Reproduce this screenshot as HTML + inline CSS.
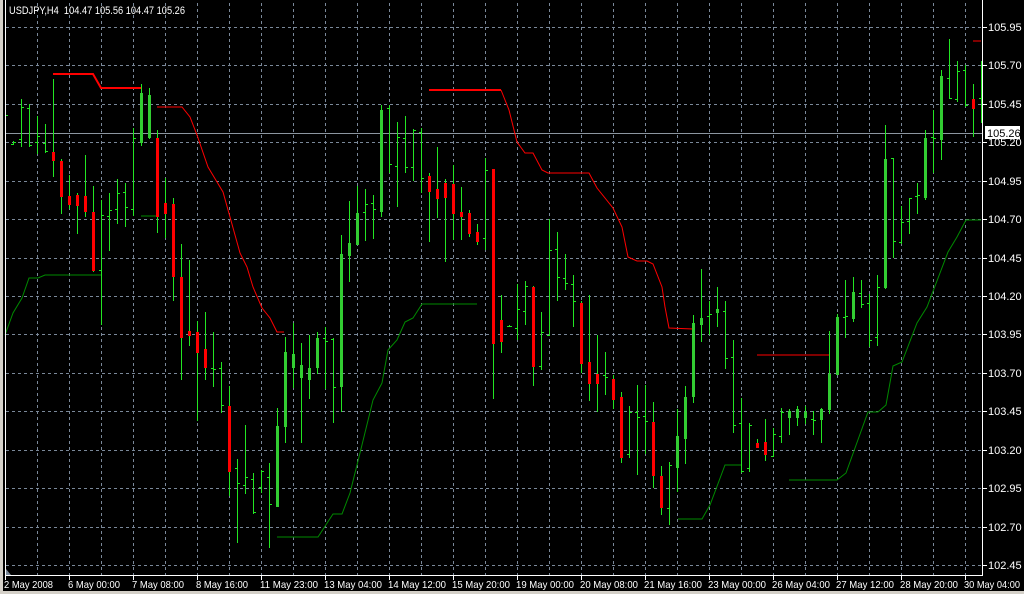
<!DOCTYPE html>
<html><head><meta charset="utf-8"><style>
html,body{margin:0;padding:0;background:#000;width:1024px;height:594px;overflow:hidden}
svg{display:block}
text{font-family:"Liberation Sans",sans-serif;font-size:11px;fill:#fff}
.b text{font-size:10.5px}
</style></head><body>
<svg width="1024" height="594" viewBox="0 0 1024 594" xmlns="http://www.w3.org/2000/svg">
<rect width="1024" height="594" fill="#000"/>
<rect x="0" y="0" width="3" height="594" fill="#d4d0c8"/>
<rect x="0" y="591" width="1024" height="3" fill="#d4d0c8"/>
<g stroke="#7a8899" stroke-width="1" stroke-dasharray="3,3" fill="none">
<path d="M37.5 3V575M69.5 3V575M101.5 3V575M133.5 3V575M165.5 3V575M197.5 3V575M229.5 3V575M261.5 3V575M293.5 3V575M325.5 3V575M357.5 3V575M389.5 3V575M421.5 3V575M453.5 3V575M485.5 3V575M517.5 3V575M549.5 3V575M581.5 3V575M613.5 3V575M645.5 3V575M677.5 3V575M709.5 3V575M741.5 3V575M773.5 3V575M805.5 3V575M837.5 3V575M869.5 3V575M901.5 3V575M933.5 3V575M965.5 3V575"/>
<path d="M6 27.5H982M6 65.5H982M6 104.5H982M6 142.5H982M6 181.5H982M6 219.5H982M6 258.5H982M6 296.5H982M6 334.5H982M6 373.5H982M6 411.5H982M6 450.5H982M6 488.5H982M6 527.5H982M6 565.5H982"/>
</g>
<path d="M6 133.5H982" stroke="#8c96a0" stroke-width="1"/>
<g stroke="#008a00" stroke-width="1" fill="none">
<polyline points="5,335 13,313 22,298 29,278 38,278 45,275 101,275"/>
<polyline points="141,216 157,216"/>
<polyline points="277,537 318,537 333,514 342,514 350,493 360,453 373,400 382,383 388,350 397,340 405,322 413,318 422,304 477,304"/>
<polyline points="678,519 702,519 710,505 725,465 741,465"/>
<polyline points="789,480 837,480 846,473 868,412 878,412 886,405 893,366 902,362 917,323 927,307 948,252 957,237 966,220 981,220"/>
</g>
<g stroke="#ff0000" fill="none">
<polyline stroke-width="2" points="53,74 93,74 101,88 141,88"/>
<polyline stroke-width="1" points="157,107 182,107 190,117 197,135 208,167 217,182 223,192 230,217 240,253 247,267 253,287 262,308 270,318 277,332 284,332"/>
<polyline stroke-width="2" points="429,90 501,90"/>
<polyline stroke-width="1" points="501,90 509,110 517,142 525,153 533,153 542,170 548,173 589,173 597,188 613,208 622,227 628,257 637,261 647,261 653,264 662,287 665,307 669,328 693,329"/>
<polyline stroke-width="1" points="757,355 829,355"/>
<polyline stroke-width="1" points="973,41 981,41"/>
</g>
<path stroke="#22e622" stroke-width="1" fill="none" d="M5.5 103V153M13.5 141V145M21.5 99V147M29.5 104V147M37.5 116V154M45.5 124V153M53.5 79V177M61.5 159V214M69.5 175V209M77.5 193V234M85.5 155V217M93.5 186V272M101.5 200V325M109.5 193V251M117.5 179V224M125.5 183V227M133.5 128V216M141.5 84V146M149.5 88V139M157.5 130V233M165.5 178V238M173.5 198V301M181.5 244V380M189.5 260V346M197.5 321V421M205.5 312V380M213.5 332V387M221.5 362V413M229.5 386V496M237.5 459V543M245.5 425V494M253.5 473V514M261.5 470V493M269.5 463V548M277.5 408V507M285.5 337V443M293.5 323V388M301.5 343V443M309.5 335V399M317.5 332V374M325.5 327V389M333.5 338V423M341.5 235V412M349.5 201V282M357.5 186V244M365.5 189V241M373.5 195V239M381.5 105V217M389.5 105V173M397.5 122V207M405.5 116V173M413.5 129V181M421.5 128V193M429.5 173V242M437.5 147V218M445.5 179V262M453.5 165V240M461.5 187V240M469.5 210V237M477.5 224V245M485.5 158V250M493.5 169V399M501.5 295V353M509.5 325V327M517.5 284V340M525.5 281V325M533.5 286V386M541.5 312V370M549.5 219V336M557.5 232V301M565.5 254V290M573.5 275V327M581.5 301V373M589.5 295V401M597.5 335V412M605.5 352V395M613.5 375V409M621.5 392V463M629.5 406V458M637.5 385V475M645.5 385V454M653.5 402V488M661.5 466V515M669.5 462V525M677.5 409V492M685.5 386V464M693.5 315V403M701.5 269V342M709.5 301V335M717.5 287V327M725.5 301V369M733.5 340V433M741.5 398V473M749.5 423V472M757.5 439V448M765.5 419V461M773.5 428V457M781.5 408V443M789.5 409V435M797.5 406V426M805.5 406V424M813.5 411V435M821.5 408V443M829.5 331V414M837.5 314V375M845.5 280V338M853.5 277V322M861.5 280V308M869.5 294V347M877.5 275V346M885.5 125V289M893.5 158V258M901.5 206V244M909.5 198V234M917.5 183V214M925.5 130V200M933.5 110V173M941.5 70V160M949.5 39V99M957.5 61V102M965.5 65V107M973.5 84V137M981.5 61V123"/>
<path stroke="#22e622" stroke-width="1" fill="none" d="M6 115.5h2M11 144.5h2M14 142.5h2M19 139.5h2M22 107.5h2M27 108.5h2M30 145.5h2M35 142.5h2M38 136.5h2M43 143.5h2M46 151.5h2M99 270.5h2M102 215.5h2M107 216.5h2M110 210.5h2M115 209.5h2M118 193.5h2M123 192.5h2M126 207.5h2M131 209.5h2M134 138.5h2M211 368.5h2M214 369.5h2M219 368.5h2M222 405.5h2M235 468.5h2M238 483.5h2M243 485.5h2M246 477.5h2M251 479.5h2M254 512.5h2M259 487.5h2M262 471.5h2M267 477.5h2M270 504.5h2M323 338.5h2M326 341.5h2M331 339.5h2M334 387.5h2M363 212.5h2M366 204.5h2M371 203.5h2M374 209.5h2M387 108.5h2M390 164.5h2M395 166.5h2M398 137.5h2M403 138.5h2M406 167.5h2M411 167.5h2M414 130.5h2M419 132.5h2M422 178.5h2M483 238.5h2M486 170.5h2M507 326.5h2M510 326.5h2M515 328.5h2M518 309.5h2M523 311.5h2M526 286.5h2M539 366.5h2M542 332.5h2M547 335.5h2M550 250.5h2M555 249.5h2M558 277.5h2M563 278.5h2M566 283.5h2M571 284.5h2M574 301.5h2M603 375.5h2M606 377.5h2M627 454.5h2M630 412.5h2M635 412.5h2M638 417.5h2M643 416.5h2M646 421.5h2M667 508.5h2M670 465.5h2M707 316.5h2M710 314.5h2M723 311.5h2M726 358.5h2M731 357.5h2M734 425.5h2M739 423.5h2M742 471.5h2M747 468.5h2M750 425.5h2M771 456.5h2M774 434.5h2M779 436.5h2M782 412.5h2M811 419.5h2M814 420.5h2M843 317.5h2M846 316.5h2M859 293.5h2M862 304.5h2M867 303.5h2M870 340.5h2M875 337.5h2M878 287.5h2M891 158.5h2M894 241.5h2M899 242.5h2M902 222.5h2M907 221.5h2M910 198.5h2M915 196.5h2M918 195.5h2M931 137.5h2M934 138.5h2M947 78.5h2M950 98.5h2M955 99.5h2M958 71.5h2M963 70.5h2M966 105.5h2M979 98.5h2"/>
<g fill="#ff0000">
<rect x="52" y="152" width="3" height="9"/><rect x="60" y="161" width="3" height="36"/><rect x="68" y="196" width="3" height="9"/><rect x="76" y="195" width="3" height="11"/><rect x="84" y="196" width="3" height="16"/><rect x="92" y="212" width="3" height="59"/><rect x="156" y="138" width="3" height="79"/><rect x="164" y="203" width="3" height="11"/><rect x="172" y="204" width="3" height="73"/><rect x="180" y="277" width="3" height="61"/><rect x="188" y="331" width="3" height="5"/><rect x="196" y="332" width="3" height="21"/><rect x="204" y="349" width="3" height="19"/><rect x="228" y="406" width="3" height="66"/><rect x="428" y="176" width="3" height="16"/><rect x="436" y="189" width="3" height="10"/><rect x="444" y="183" width="3" height="15"/><rect x="452" y="184" width="3" height="30"/><rect x="460" y="212" width="3" height="5"/><rect x="468" y="213" width="3" height="21"/><rect x="476" y="232" width="3" height="10"/><rect x="492" y="169" width="3" height="175"/><rect x="500" y="320" width="3" height="22"/><rect x="532" y="287" width="3" height="80"/><rect x="580" y="303" width="3" height="61"/><rect x="588" y="362" width="3" height="22"/><rect x="596" y="374" width="3" height="10"/><rect x="612" y="379" width="3" height="21"/><rect x="620" y="397" width="3" height="61"/><rect x="652" y="422" width="3" height="54"/><rect x="660" y="476" width="3" height="32"/><rect x="756" y="443" width="3" height="5"/><rect x="764" y="442" width="3" height="13"/><rect x="972" y="99" width="3" height="10"/>
</g>
<g fill="#32cd32">
<rect x="140" y="93" width="3" height="50"/><rect x="148" y="95" width="3" height="43"/><rect x="276" y="426" width="3" height="81"/><rect x="284" y="352" width="3" height="75"/><rect x="292" y="354" width="3" height="14"/><rect x="300" y="365" width="3" height="13"/><rect x="308" y="368" width="3" height="12"/><rect x="316" y="338" width="3" height="30"/><rect x="340" y="254" width="3" height="133"/><rect x="348" y="243" width="3" height="13"/><rect x="356" y="213" width="3" height="32"/><rect x="380" y="110" width="3" height="102"/><rect x="676" y="436" width="3" height="32"/><rect x="684" y="397" width="3" height="42"/><rect x="692" y="323" width="3" height="74"/><rect x="700" y="318" width="3" height="7"/><rect x="716" y="309" width="3" height="4"/><rect x="788" y="411" width="3" height="7"/><rect x="796" y="409" width="3" height="9"/><rect x="804" y="412" width="3" height="6"/><rect x="820" y="409" width="3" height="11"/><rect x="828" y="374" width="3" height="36"/><rect x="836" y="317" width="3" height="58"/><rect x="852" y="292" width="3" height="27"/><rect x="884" y="159" width="3" height="129"/><rect x="924" y="138" width="3" height="60"/><rect x="940" y="76" width="3" height="64"/>
</g>
<path d="M5.5 0V575.5H982.5V0" stroke="#fff" stroke-width="1" fill="none"/>
<path stroke="#fff" stroke-width="1" d="M983 27.5h4M983 65.5h4M983 104.5h4M983 142.5h4M983 181.5h4M983 219.5h4M983 258.5h4M983 296.5h4M983 334.5h4M983 373.5h4M983 411.5h4M983 450.5h4M983 488.5h4M983 527.5h4M983 565.5h4M5.5 576v4M69.5 576v4M133.5 576v4M197.5 576v4M261.5 576v4M325.5 576v4M389.5 576v4M453.5 576v4M517.5 576v4M581.5 576v4M645.5 576v4M709.5 576v4M773.5 576v4M837.5 576v4M901.5 576v4M965.5 576v4"/>
<polygon points="6,569 6,575 11,575" fill="#7a8899"/>
<text x="9" y="14" textLength="176" lengthAdjust="spacingAndGlyphs" xml:space="preserve">USDJPY,H4  104.47 105.56 104.47 105.26</text>
<g>
<text x="988" y="31">105.95</text><text x="988" y="69">105.70</text><text x="988" y="108">105.45</text><text x="988" y="146">105.20</text><text x="988" y="185">104.95</text><text x="988" y="223">104.70</text><text x="988" y="262">104.45</text><text x="988" y="300">104.20</text><text x="988" y="338">103.95</text><text x="988" y="377">103.70</text><text x="988" y="415">103.45</text><text x="988" y="454">103.20</text><text x="988" y="492">102.95</text><text x="988" y="531">102.70</text><text x="988" y="569">102.45</text>
</g>
<rect x="985" y="126" width="35" height="13" fill="#fff"/>
<text x="987" y="137" style="fill:#000">105.26</text>
<g class="b">
<text x="4" y="588" textLength="49" lengthAdjust="spacingAndGlyphs">2 May 2008</text>
<text x="68" y="588" textLength="52" lengthAdjust="spacingAndGlyphs">6 May 00:00</text>
<text x="132" y="588" textLength="52" lengthAdjust="spacingAndGlyphs">7 May 08:00</text>
<text x="196" y="588" textLength="52" lengthAdjust="spacingAndGlyphs">8 May 16:00</text>
<text x="260" y="588" textLength="58" lengthAdjust="spacingAndGlyphs">11 May 23:00</text>
<text x="324" y="588" textLength="58" lengthAdjust="spacingAndGlyphs">13 May 04:00</text>
<text x="388" y="588" textLength="58" lengthAdjust="spacingAndGlyphs">14 May 12:00</text>
<text x="452" y="588" textLength="58" lengthAdjust="spacingAndGlyphs">15 May 20:00</text>
<text x="516" y="588" textLength="58" lengthAdjust="spacingAndGlyphs">19 May 00:00</text>
<text x="580" y="588" textLength="58" lengthAdjust="spacingAndGlyphs">20 May 08:00</text>
<text x="644" y="588" textLength="58" lengthAdjust="spacingAndGlyphs">21 May 16:00</text>
<text x="708" y="588" textLength="58" lengthAdjust="spacingAndGlyphs">23 May 00:00</text>
<text x="772" y="588" textLength="58" lengthAdjust="spacingAndGlyphs">26 May 04:00</text>
<text x="836" y="588" textLength="58" lengthAdjust="spacingAndGlyphs">27 May 12:00</text>
<text x="900" y="588" textLength="58" lengthAdjust="spacingAndGlyphs">28 May 20:00</text>
<text x="964" y="588" textLength="56" lengthAdjust="spacingAndGlyphs">30 May 04:00</text>
</g>
</svg>
</body></html>
